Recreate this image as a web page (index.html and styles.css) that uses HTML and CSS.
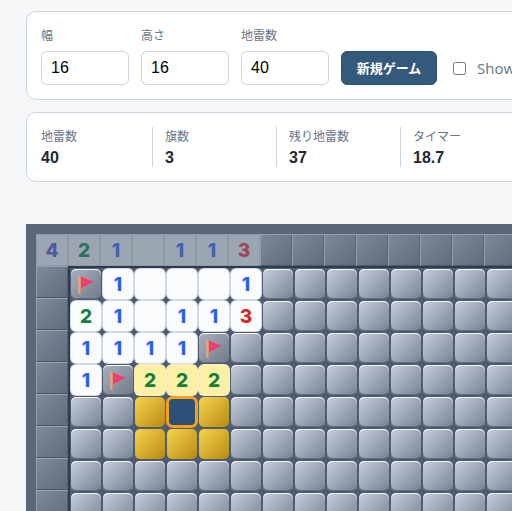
FILE: index.html
```html
<!DOCTYPE html>
<html lang="ja">
<head>
<meta charset="utf-8">
<title>マインスイーパー</title>
<link rel="stylesheet" href="styles.css">
</head>
<body>
<main class="page">
  <section class="card controls">
    <div class="group"><label class="label" for="w">幅</label><input class="input" id="w" type="number" value="16"></div>
    <div class="group"><label class="label" for="h">高さ</label><input class="input" id="h" type="number" value="16"></div>
    <div class="group"><label class="label" for="m">地雷数</label><input class="input" id="m" type="number" value="40"></div>
    <button class="btn" type="button">新規ゲーム</button>
    <label class="check"><input class="box" type="checkbox"><span>Show Mines</span></label>
  </section>
  <section class="card stats">
    <div class="stat"><span class="stat-label">地雷数</span><strong class="stat-value">40</strong></div>
    <div class="stat"><span class="stat-label">旗数</span><strong class="stat-value">3</strong></div>
    <div class="stat"><span class="stat-label">残り地雷数</span><strong class="stat-value">37</strong></div>
    <div class="stat"><span class="stat-label">タイマー</span><strong class="stat-value">18.7</strong></div>
  </section>
  <section class="board">
    <div class="top">
      <div class="hint n4">4</div><div class="hint n2">2</div><div class="hint n1">1</div><div class="hint"></div><div class="hint n1">1</div><div class="hint n1">1</div><div class="hint n3">3</div>
      <div class="head"></div><div class="head"></div><div class="head"></div><div class="head"></div><div class="head"></div><div class="head"></div><div class="head"></div><div class="head"></div>
    </div>
    <div class="lower">
      <div class="side">
        <div class="head"></div><div class="head"></div><div class="head"></div><div class="head"></div><div class="head"></div><div class="head"></div><div class="head"></div><div class="head"></div>
      </div>
      <div class="field">
        <div class="cell fl"><svg class="flag" viewBox="0 0 30 30"><defs><linearGradient id="pole" x1="0" x2="1" y1="0" y2="0"><stop offset="0" stop-color="#f7b08c"/><stop offset="1" stop-color="#d58a62"/></linearGradient></defs><rect x="7.4" y="7" width="2.6" height="18" fill="url(#pole)"/><polygon points="10,7.5 23,13 10,19" fill="#f43f6e"/></svg></div>
        <div class="cell op n1">1</div><div class="cell op"></div><div class="cell op"></div><div class="cell op"></div><div class="cell op n1">1</div>
        <div class="cell"></div><div class="cell"></div><div class="cell"></div><div class="cell"></div><div class="cell"></div><div class="cell"></div><div class="cell"></div><div class="cell"></div>

        <div class="cell op n2">2</div><div class="cell op n1">1</div><div class="cell op"></div><div class="cell op n1">1</div><div class="cell op n1">1</div><div class="cell op n3">3</div>
        <div class="cell"></div><div class="cell"></div><div class="cell"></div><div class="cell"></div><div class="cell"></div><div class="cell"></div><div class="cell"></div><div class="cell"></div>

        <div class="cell op n1">1</div><div class="cell op n1">1</div><div class="cell op n1">1</div><div class="cell op n1">1</div>
        <div class="cell fl"><svg class="flag" viewBox="0 0 30 30"><rect x="7.4" y="7" width="2.6" height="18" fill="url(#pole)"/><polygon points="10,7.5 23,13 10,19" fill="#f43f6e"/></svg></div>
        <div class="cell"></div><div class="cell"></div><div class="cell"></div><div class="cell"></div><div class="cell"></div><div class="cell"></div><div class="cell"></div><div class="cell"></div><div class="cell"></div>

        <div class="cell op n1">1</div>
        <div class="cell fl"><svg class="flag" viewBox="0 0 30 30"><rect x="7.4" y="7" width="2.6" height="18" fill="url(#pole)"/><polygon points="10,7.5 23,13 10,19" fill="#f43f6e"/></svg></div>
        <div class="cell near n2">2</div><div class="cell near n2">2</div><div class="cell near n2">2</div>
        <div class="cell"></div><div class="cell"></div><div class="cell"></div><div class="cell"></div><div class="cell"></div><div class="cell"></div><div class="cell"></div><div class="cell"></div><div class="cell"></div>

        <div class="cell"></div><div class="cell"></div><div class="cell gold"></div><div class="cell sel"></div><div class="cell gold"></div>
        <div class="cell"></div><div class="cell"></div><div class="cell"></div><div class="cell"></div><div class="cell"></div><div class="cell"></div><div class="cell"></div><div class="cell"></div><div class="cell"></div>

        <div class="cell"></div><div class="cell"></div><div class="cell gold"></div><div class="cell gold"></div><div class="cell gold"></div>
        <div class="cell"></div><div class="cell"></div><div class="cell"></div><div class="cell"></div><div class="cell"></div><div class="cell"></div><div class="cell"></div><div class="cell"></div><div class="cell"></div>

        <div class="cell"></div><div class="cell"></div><div class="cell"></div><div class="cell"></div><div class="cell"></div><div class="cell"></div><div class="cell"></div><div class="cell"></div><div class="cell"></div><div class="cell"></div><div class="cell"></div><div class="cell"></div><div class="cell"></div><div class="cell"></div>

        <div class="cell"></div><div class="cell"></div><div class="cell"></div><div class="cell"></div><div class="cell"></div><div class="cell"></div><div class="cell"></div><div class="cell"></div><div class="cell"></div><div class="cell"></div><div class="cell"></div><div class="cell"></div><div class="cell"></div><div class="cell"></div>
      </div>
    </div>
  </section>
</main>
</body>
</html>
```
FILE: styles.css
```css
* { box-sizing: border-box; }
html, body { margin: 0; height: 100%; overflow: hidden; }
body {
  background: #f4f6f8;
  font-family: "Liberation Sans", "Noto Sans CJK JP", sans-serif;
  color: #1e293b;
}
.page {
  width: 760px;
  padding: 11px 0 0 26px;
  display: flex;
  flex-direction: column;
  align-items: flex-start;
}
.card {
  width: 700px;
  background: #fff;
  border: 1px solid #cbd5e1;
  border-radius: 10px;
}
.controls {
  height: 89px;
  padding: 14px;
  display: flex;
  align-items: flex-end;
  gap: 12px;
}
.group { display: flex; flex-direction: column; gap: 5px; }
.label { font-size: 12px; line-height: 19px; color: #64748b; }
.input {
  width: 88px;
  height: 34px;
  padding: 0 9px;
  border: 1px solid #cbd5e1;
  border-radius: 6px;
  font: 16px "Liberation Sans", Arial, sans-serif;
  color: #000;
  background: #fff;
  appearance: textfield;
}
.btn {
  width: 96px;
  height: 34px;
  border: 1px solid #2f5575;
  border-radius: 6px;
  background: #34597a;
  color: #fff;
  font: 700 13px "Liberation Sans", "Noto Sans CJK JP", sans-serif;
  margin-right: 4px;
  padding: 0 0 2px;
}
.check {
  height: 34px;
  display: flex;
  align-items: center;
  gap: 11px;
  font: 15px "Open Sans", sans-serif;
  color: #64748b;
}
.box { width: 13px; height: 13px; margin: 0; }
.stats {
  height: 70px;
  margin-top: 12px;
  padding: 14px;
  display: flex;
  gap: 12px;
}
.stat {
  width: 112px;
  height: 40px;
  border-right: 1px solid #cbd5e1;
  display: flex;
  flex-direction: column;
  gap: 1px;
}
.stat:last-child { border-right: 0; }
.stat-label { font-size: 12px; line-height: 20px; color: #64748b; }
.stat-value { font-size: 16px; line-height: 19px; font-weight: 700; color: #1e293b; }
.board {
  width: 700px;
  margin-top: 42px;
  padding: 10px;
  background: #5a6779;
}
.top { display: flex; }
.lower { display: flex; }
.side { display: flex; flex-direction: column; flex: none; }
.hint, .head { width: 32px; height: 32px; flex: none; }
.hint {
  background: #9ca5b2;
  border: 1px solid #8e98a6;
  display: flex;
  align-items: center;
  justify-content: center;
  font: 800 19px Inter, sans-serif;
}
.hint.n4 { color: #4f5a9a; }
.hint.n2 { color: #2f6f60; }
.hint.n1 { color: #3f62ae; }
.hint.n3 { color: #984856; }
.head {
  background: linear-gradient(135deg, #7f8a99, #5f6b7b);
  border: 1px solid #586475;
  border-top-color: #94a0ae;
  border-left-color: #94a0ae;
  border-bottom-color: #4e5a6b;
}
.field {
  flex: none;
  width: 450px;
  border-left: 2px solid #2f3b4e;
  border-top: 2px solid #2f3b4e;
  background: #4f5c6f;
  display: grid;
  grid-template-columns: repeat(14, 32px);
  grid-auto-rows: 32px;
}
.cell {
  margin: 1px;
  border-radius: 5px;
  background: linear-gradient(135deg, #c8cfdb, #768295);
  box-shadow: inset 0 1px 0 #f4f6fa, inset 0 -1px 0 #5f6b7d;
  display: flex;
  align-items: center;
  justify-content: center;
  font: 800 19px Inter, sans-serif;
}
.cell.fl { background: linear-gradient(135deg, #a9b1bf, #6f7a8a); }
.flag { width: 30px; height: 30px; display: block; }
.cell.op { background: #fbfcfe; box-shadow: 0 0 0 1px #d3dae5; }
.cell.near { background: #fdf0a6; box-shadow: 0 0 0 1px #f8f0c0; }
.cell.gold { background: linear-gradient(135deg, #f5d44c, #b98a12); box-shadow: none; }
.cell.sel { background: #2b5077; border: 2px solid #f8a01c; border-radius: 6px; box-shadow: 0 0 0 1px #f8a01c; }
.n1 { color: #2563eb; }
.n2 { color: #15803d; }
.n3 { color: #dc2626; }
```
